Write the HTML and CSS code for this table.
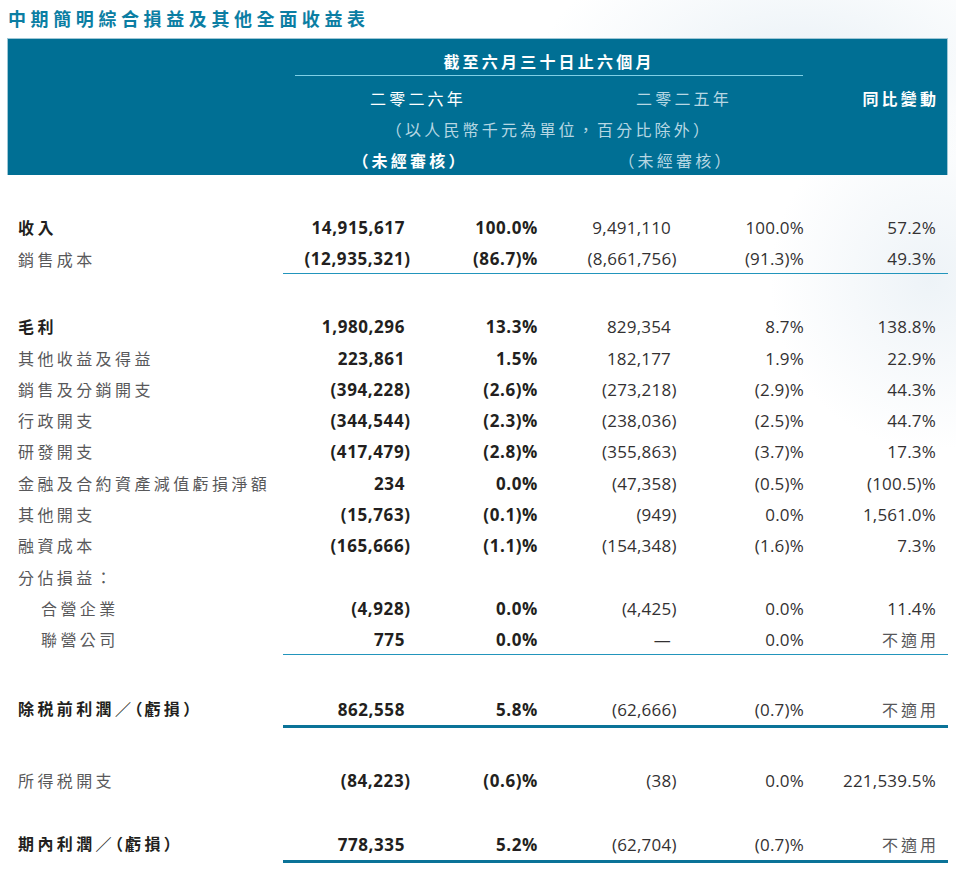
FILE: index.html
```html
<!DOCTYPE html>
<html lang="zh-Hant">
<head>
<meta charset="utf-8">
<title>中期簡明綜合損益及其他全面收益表</title>
<link rel="stylesheet" href="styles.css">
</head>
<body>
<div class="page">
  <h1 class="title">中期簡明綜合損益及其他全面收益表</h1>

  <div class="head">
    <div class="h-period">截至六月三十日止六個月</div>
    <div class="h-y26">二零二六年</div>
    <div class="h-y25">二零二五年</div>
    <div class="h-chg">同比變動</div>
    <div class="h-unit">（以人民幣千元為單位，百分比除外）</div>
    <div class="h-a26">（未經審核）</div>
    <div class="h-a25">（未經審核）</div>
  </div>

  <div class="rows">
    <div class="row first">
      <div class="lbl strong">收入</div>
      <div class="n b">14,915,617</div>
      <div class="n b p">100.0%</div>
      <div class="n">9,491,110</div>
      <div class="n p">100.0%</div>
      <div class="n p">57.2%</div>
    </div>
    <div class="row rule">
      <div class="lbl">銷售成本</div>
      <div class="n b">(12,935,321<span class="hang">)</span></div>
      <div class="n b p">(86.7)%</div>
      <div class="n">(8,661,756<span class="hang">)</span></div>
      <div class="n p">(91.3)%</div>
      <div class="n p">49.3%</div>
    </div>

    <div class="row gap1">
      <div class="lbl strong">毛利</div>
      <div class="n b">1,980,296</div>
      <div class="n b p">13.3%</div>
      <div class="n">829,354</div>
      <div class="n p">8.7%</div>
      <div class="n p">138.8%</div>
    </div>
    <div class="row">
      <div class="lbl">其他收益及得益</div>
      <div class="n b">223,861</div>
      <div class="n b p">1.5%</div>
      <div class="n">182,177</div>
      <div class="n p">1.9%</div>
      <div class="n p">22.9%</div>
    </div>
    <div class="row">
      <div class="lbl">銷售及分銷開支</div>
      <div class="n b">(394,228<span class="hang">)</span></div>
      <div class="n b p">(2.6)%</div>
      <div class="n">(273,218<span class="hang">)</span></div>
      <div class="n p">(2.9)%</div>
      <div class="n p">44.3%</div>
    </div>
    <div class="row">
      <div class="lbl">行政開支</div>
      <div class="n b">(344,544<span class="hang">)</span></div>
      <div class="n b p">(2.3)%</div>
      <div class="n">(238,036<span class="hang">)</span></div>
      <div class="n p">(2.5)%</div>
      <div class="n p">44.7%</div>
    </div>
    <div class="row">
      <div class="lbl">研發開支</div>
      <div class="n b">(417,479<span class="hang">)</span></div>
      <div class="n b p">(2.8)%</div>
      <div class="n">(355,863<span class="hang">)</span></div>
      <div class="n p">(3.7)%</div>
      <div class="n p">17.3%</div>
    </div>
    <div class="row">
      <div class="lbl">金融及合約資產減值虧損淨額</div>
      <div class="n b">234</div>
      <div class="n b p">0.0%</div>
      <div class="n">(47,358<span class="hang">)</span></div>
      <div class="n p">(0.5)%</div>
      <div class="n p">(100.5)%</div>
    </div>
    <div class="row">
      <div class="lbl">其他開支</div>
      <div class="n b">(15,763<span class="hang">)</span></div>
      <div class="n b p">(0.1)%</div>
      <div class="n">(949<span class="hang">)</span></div>
      <div class="n p">0.0%</div>
      <div class="n p">1,561.0%</div>
    </div>
    <div class="row">
      <div class="lbl">融資成本</div>
      <div class="n b">(165,666<span class="hang">)</span></div>
      <div class="n b p">(1.1)%</div>
      <div class="n">(154,348<span class="hang">)</span></div>
      <div class="n p">(1.6)%</div>
      <div class="n p">7.3%</div>
    </div>
    <div class="row">
      <div class="lbl">分佔損益：</div>
    </div>
    <div class="row">
      <div class="lbl sub">合營企業</div>
      <div class="n b">(4,928<span class="hang">)</span></div>
      <div class="n b p">0.0%</div>
      <div class="n">(4,425<span class="hang">)</span></div>
      <div class="n p">0.0%</div>
      <div class="n p">11.4%</div>
    </div>
    <div class="row rule">
      <div class="lbl sub">聯營公司</div>
      <div class="n b">775</div>
      <div class="n b p">0.0%</div>
      <div class="n">—</div>
      <div class="n p">0.0%</div>
      <div class="n p"><span class="na">不適用</span></div>
    </div>

    <div class="row total gap2">
      <div class="lbl strong">除税前利潤／<span class="hp">（</span>虧損<span class="hp">）</span></div>
      <div class="n b">862,558</div>
      <div class="n b p">5.8%</div>
      <div class="n">(62,666<span class="hang">)</span></div>
      <div class="n p">(0.7)%</div>
      <div class="n p"><span class="na">不適用</span></div>
    </div>

    <div class="row gap3">
      <div class="lbl">所得税開支</div>
      <div class="n b">(84,223<span class="hang">)</span></div>
      <div class="n b p">(0.6)%</div>
      <div class="n">(38<span class="hang">)</span></div>
      <div class="n p">0.0%</div>
      <div class="n p">221,539.5%</div>
    </div>

    <div class="row total gap4">
      <div class="lbl strong">期內利潤／<span class="hp">（</span>虧損<span class="hp">）</span></div>
      <div class="n b">778,335</div>
      <div class="n b p">5.2%</div>
      <div class="n">(62,704<span class="hang">)</span></div>
      <div class="n p">(0.7)%</div>
      <div class="n p"><span class="na">不適用</span></div>
    </div>
  </div>
</div>
</body>
</html>
```

FILE: styles.css
```css
html, body {
  margin: 0;
  padding: 0;
}

body {
  background:
    radial-gradient(ellipse 260px 120px at 800px 60px, rgba(226, 236, 243, 0.7), rgba(255, 255, 255, 0) 100%),
    radial-gradient(ellipse 160px 170px at 930px 280px, rgba(230, 238, 244, 0.7), rgba(255, 255, 255, 0) 100%),
    #ffffff;
  font-family: "Open Sans", "Noto Sans CJK TC", sans-serif;
  color: #231f20;
  width: 956px;
  min-height: 871px;
}

.page {
  padding: 6px 8px 0 7px;
}

.title {
  margin: 0;
  padding-left: 1px;
  font-size: 18px;
  line-height: 24px;
  font-weight: 700;
  letter-spacing: 4.6px;
  color: #0b7ea3;
  font-family: "Noto Sans CJK TC", sans-serif;
}

/* ---------- blue heading band ---------- */
.head {
  margin-top: 8px;
  width: 941px;
  box-sizing: border-box;
  background: #006f94;
  border: 1px solid #9ec7d6;
  border-bottom: 0;
  display: grid;
  grid-template-columns: 275px repeat(5, 133px);
  font-family: "Noto Sans CJK TC", sans-serif;
  font-size: 16px;
  letter-spacing: 3.2px;
  color: #ffffff;
}

.h-period {
  grid-column: 2 / 6;
  grid-row: 1;
  margin: 0 12px;
  padding-top: 9px;
  line-height: 27px;
  border-bottom: 1.3px solid #7fd0e6;
  text-align: center;
  font-weight: 700;
}

.h-y26,
.h-y25,
.h-chg {
  grid-row: 2;
  padding-top: 6.7px;
  line-height: 31px;
}

.h-y26 {
  grid-column: 2 / 4;
  text-align: center;
  padding-left: 4px;
}

.h-y25 {
  grid-column: 4 / 6;
  text-align: center;
  color: #b6d7e3;
  padding-left: 4px;
}

.h-chg {
  grid-column: 6 / 7;
  text-align: right;
  padding-right: 8.8px;
  font-weight: 700;
}

.h-unit {
  grid-column: 2 / 6;
  grid-row: 3;
  line-height: 31px;
  text-align: center;
  color: #b6d7e3;
}

.h-a26,
.h-a25 {
  grid-row: 4;
  line-height: 30px;
  text-align: center;
}

.h-a26 {
  grid-column: 2 / 4;
  font-weight: 700;
  padding-right: 12px;
}

.h-a25 {
  grid-column: 4 / 6;
  color: #b6d7e3;
  padding-right: 12px;
}

/* ---------- table rows ---------- */
.rows {
  width: 941px;
}

.row {
  display: grid;
  grid-template-columns: 276px repeat(5, 133px);
  align-items: start;
}

.row.first { margin-top: 37.6px; }
.row.gap1 { margin-top: 36.4px; }
.row.gap2 { margin-top: 37.7px; }
.row.gap3 { margin-top: 37.2px; }
.row.gap4 { margin-top: 32.4px; }

.lbl {
  padding-left: 11px;
  line-height: 31.3px;
  font-size: 16px;
  letter-spacing: 3.4px;
  color: #58585a;
  font-family: "Noto Sans CJK TC", sans-serif;
  white-space: nowrap;
}

.lbl.strong {
  color: #231f20;
  font-weight: 700;
}

.lbl.sub {
  padding-left: 34px;
}

.hp {
  font-feature-settings: "halt";
  letter-spacing: 2px;
}

.n {
  text-align: right;
  padding-right: 11px;
  line-height: 31.3px;
  font-size: 17px;
  letter-spacing: 0.2px;
  color: #333132;
  white-space: nowrap;
}

.n:last-child {
  padding-right: 12px;
}

.n.b {
  font-weight: 700;
  color: #231f20;
  letter-spacing: 0.6px;
}

.hang {
  margin-right: -0.33em;
}

.na {
  font-family: "Noto Sans CJK TC", sans-serif;
  font-size: 16px;
  line-height: 1;
  letter-spacing: 3px;
  margin-right: -3px;
  color: #58585a;
}

.row.rule > .n {
  line-height: 28px;
  padding-top: 1.3px;
  border-bottom: 1.5px solid #2295bc;
}

.row.total > .n {
  line-height: 30px;
  padding-top: 1.3px;
  border-bottom: 3px solid #0b7398;
}
```
